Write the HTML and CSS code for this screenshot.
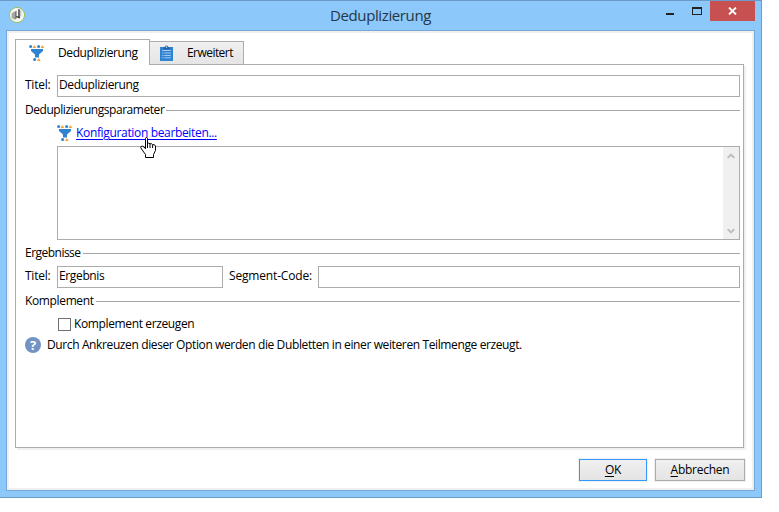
FILE: index.html
```html
<!DOCTYPE html>
<html lang="de">
<head>
<meta charset="utf-8">
<title>Deduplizierung</title>
<link rel="stylesheet" href="styles.css">
</head>
<body>
<svg width="0" height="0" class="defs">
  <symbol id="funnel" viewBox="0 0 16 16">
    <circle cx="1.6" cy="1.6" r="1.5" fill="#2f83d0"/><path d="M5.4 0l1.9 3H3.5z" fill="#f2a33c"/>
    <circle cx="9.6" cy="1.6" r="1.5" fill="#2f83d0"/><path d="M13.4 0l1.9 3h-3.8z" fill="#f2a33c"/>
    <path d="M2 4h12v2L10 9.500V12.500H6V9.500L2 6z" fill="#2f83d0"/>
    <circle cx="5.6" cy="14.5" r="1.5" fill="#2f83d0"/><path d="M9.8 13l1.9 3H7.9z" fill="#f2a33c"/>
  </symbol>
</svg>
<div class="window">
  <header class="titlebar">
    <svg class="app" width="18" height="18" viewBox="0 0 18 18">
      <circle cx="9" cy="9" r="7.6" fill="#f4f7f2" stroke="#9bbf62" stroke-width="1"/>
      <path d="M3.6 7.2l3-1.8v8.4l-3-1.700z" fill="#a6a8a4"/><path d="M6.6 5.8l2-1v7.800l-2 1z" fill="#777b76"/>
      <path d="M11 3.200v8.600M8.300 10.600q2 .4 3.600 1.400" fill="none" stroke="#333" stroke-width="1.400"/>
      <path d="M12.800 4.500v6" stroke="#b4b7b2" stroke-width="1"/>
    </svg>
    <h1>Deduplizierung</h1>
    <div class="controls">
      <span class="min"></span><span class="max"></span>
      <span class="close"><svg width="9" height="8" viewBox="0 0 9 8"><path d="M1 .5l7 7M8 .5l-7 7" stroke="#fff" stroke-width="1.8"/></svg></span>
    </div>
  </header>
  <main class="client">
    <nav class="tabs">
      <div class="tab active"><svg class="ico" width="16" height="16"><use href="#funnel"/></svg><span class="t-ded">Deduplizierung</span></div>
      <div class="tab"><svg class="ico clip" width="13" height="16" viewBox="0 0 12 16" preserveAspectRatio="none">
        <path d="M0 2h12v14H0z" fill="#2f83d0"/><path d="M3 4.3V2.600h1.200C4.200-.3 7.800-.3 7.800 2.600H9v1.700z" fill="#275f9d"/><circle cx="6" cy="2" r=".8" fill="#dce9f5"/>
        <path d="M2 5.500h8M2 8h1.200M4 8h6M2 10.500h1.200M4 10.500h6M2 12.800h1.200M4 12.800h6" stroke="#a9d0f2" stroke-width=".9"/></svg><span class="t-tab2">Erweitert</span></div>
    </nav>
    <section class="panel">
      <div class="row first"><label>Titel:</label><div class="input grow"><span class="t-ded">Deduplizierung</span></div></div>
      <div class="group g1"><span class="t-g1">Deduplizierungsparameter</span></div>
      <div class="linkrow"><svg width="16" height="16"><use href="#funnel"/></svg><a class="t-link">Konfiguration bearbeiten...</a>
        <svg class="cursor" width="18" height="22" viewBox="0 0 18 22"><path d="M5.500 1.500q0-1 1-1t1 1v5q1.200-1 2.500.3 1.500-.6 2.500.7 2.500-.2 3 1.500v4.500l-2 4v3h-8v-3l-4-5.500q-1.200-1.700-.5-2.500 1.200-1 3 .5l1.500 1.800z" fill="#fff" stroke="#000"/><path d="M7.500 6v5M10 7v4M12.600 8v3" stroke="#000" fill="none"/></svg>
      </div>
      <div class="memo"><div class="scroll">
        <svg width="8" height="6" viewBox="0 0 8 6"><path d="M.7 4.900L4 1.600l3.300 3.300" fill="none" stroke="#bcbcbc" stroke-width="2"/></svg>
        <svg width="8" height="6" viewBox="0 0 8 6"><path d="M.7 1.100L4 4.400l3.300-3.300" fill="none" stroke="#bcbcbc" stroke-width="2"/></svg>
      </div></div>
      <div class="group g2"><span class="t-g2">Ergebnisse</span></div>
      <div class="row second"><label>Titel:</label><div class="input result"><span class="t-erg">Ergebnis</span></div><label class="code"><span class="t-code">Segment-Code:</span></label><div class="input grow"></div></div>
      <div class="group g3"><span class="t-g3">Komplement</span></div>
      <div class="check"><span class="box"></span><span class="t-chk">Komplement erzeugen</span></div>
      <div class="help"><span class="q">?</span><span class="t-help">Durch Ankreuzen dieser Option werden die Dubletten in einer weiteren Teilmenge erzeugt.</span></div>
    </section>
    <footer class="buttons"><div class="btn ok"><span><u>O</u>K</span></div><div class="btn cancel"><span><u>A</u>bbrechen</span></div></footer>
  </main>
</div>
</body>
</html>
```
FILE: styles.css
```css
* { box-sizing: border-box; }
body { margin: 0; background: #fff; color: #000; font: 12px/16px "Open Sans", "Noto Sans", sans-serif; letter-spacing: -0.25px; white-space: nowrap; overflow: hidden; }
.defs { position: absolute; }
svg { display: block; flex: none; }
.window { width: 762px; height: 498px; background: #8dc8fa; border: solid #6b9bc9; border-width: 1px 1px 1px 0; padding: 0 6px 6px; }
.titlebar { height: 29px; display: grid; grid-template-columns: 93px 1fr 93px; }
.app { margin: 5px 0 0 2px; }
h1 { margin: 3px 0 0; font-size: 15px; line-height: 22px; font-weight: 400; text-align: center; color: #253746; letter-spacing: -0.38px; }
.controls { display: flex; justify-content: flex-end; }
.min { width: 8px; height: 2px; background: #222; margin: 12px 18px 0 0; flex: none; }
.max { width: 10px; height: 8px; border: 1px solid #222; border-top-width: 2px; margin: 6px 8px 0 0; flex: none; }
.close { width: 45px; height: 20px; background: #c75050; display: flex; align-items: center; justify-content: center; flex: none; }
.client { width: 749px; height: 461px; background: #fff; border: 1px solid #75a8d8; box-shadow: inset 0 0 0 2px #f0f0f0; padding: 8px 9px 0 8px; }
.tabs { height: 26px; margin-bottom: -1px; display: flex; align-items: flex-end; position: relative; }
.tab { display: flex; align-items: center; height: 24px; width: 94px; border: 1px solid #acacac; border-left: 0; background: linear-gradient(#f0f0f0, #e5e5e5); padding-left: 10px; }
.tab.active { height: 26px; width: 135px; background: #fff; border-left: 1px solid #acacac; border-bottom: 0; padding-left: 13px; }
.active .ico { margin-right: 13px; }
.clip { margin-right: 14px; }
.panel { width: 729px; height: 384px; border: 1px solid #acacac; box-shadow: 2px 2px 0 #f0f0f0; padding: 10px 3px 0 9px; background: #fff; }
.row { display: flex; height: 22px; align-items: center; }
.row > label { padding-bottom: 2px; }
.row > label:first-child { width: 32px; }
.input { height: 22px; border: 1px solid #acacac; padding: 1px 0 0 1px; background: #fff; }
.grow { flex: 1; }
.result { width: 166px; }
.row > .code { width: 95px; padding-left: 6px; }
.group { display: flex; align-items: center; height: 16px; }
.group::after { content: ""; flex: 1; height: 1px; background: #a6a6a6; margin-left: 2px; }
.g1 { margin-top: 5px; }
.linkrow { display: flex; align-items: center; margin: 7px 0 0 32px; height: 16px; position: relative; }
.linkrow a { margin-left: 3px; color: #00f; text-decoration: underline; text-underline-offset: 2px; }
.cursor { position: absolute; left: 83px; top: 12px; z-index: 1; }
.memo { height: 94px; margin: 5px 0 0 32px; border: 1px solid #acacac; display: flex; justify-content: flex-end; }
.scroll { width: 16px; background: #f0f0f0; display: flex; flex-direction: column; justify-content: space-between; align-items: center; padding: 6px 0 5px; }
.g2, .g3 { margin-top: 5px; }
.second { margin-top: 5px; }
.check { display: flex; align-items: center; height: 16px; margin: 7px 0 0 33px; }
.box { width: 13px; height: 13px; border: 1px solid #707070; margin-right: 3px; }
.help { display: flex; align-items: center; margin-top: 5px; height: 16px; }
.q { width: 16px; height: 16px; border-radius: 50%; background: #7293c4; color: #fff; font: bold 13px/16px "Open Sans", sans-serif; text-align: center; margin-right: 6px; }
.t-ded { letter-spacing: -0.39px; }
.t-tab2 { letter-spacing: -0.55px; }
.t-g1 { letter-spacing: -0.45px; }
.t-link { letter-spacing: -0.34px; }
.t-g2 { letter-spacing: -0.52px; }
.t-erg { letter-spacing: -0.36px; }
.t-code { letter-spacing: -0.17px; }
.t-g3 { letter-spacing: -0.36px; }
.t-chk { letter-spacing: -0.37px; }
.t-help { letter-spacing: -0.382px; }
.buttons { display: flex; justify-content: flex-end; gap: 8px; margin-top: 11px; }
.btn { height: 22px; border: 1px solid #acacac; background: linear-gradient(#f0f0f0, #e4e4e4); box-shadow: 0 0 0 1px #f0f0f0; display: flex; align-items: center; justify-content: center; }
.btn u { text-underline-offset: 2px; }
.ok { width: 68px; border-color: #3399ff; }
.cancel { width: 90px; }
```
